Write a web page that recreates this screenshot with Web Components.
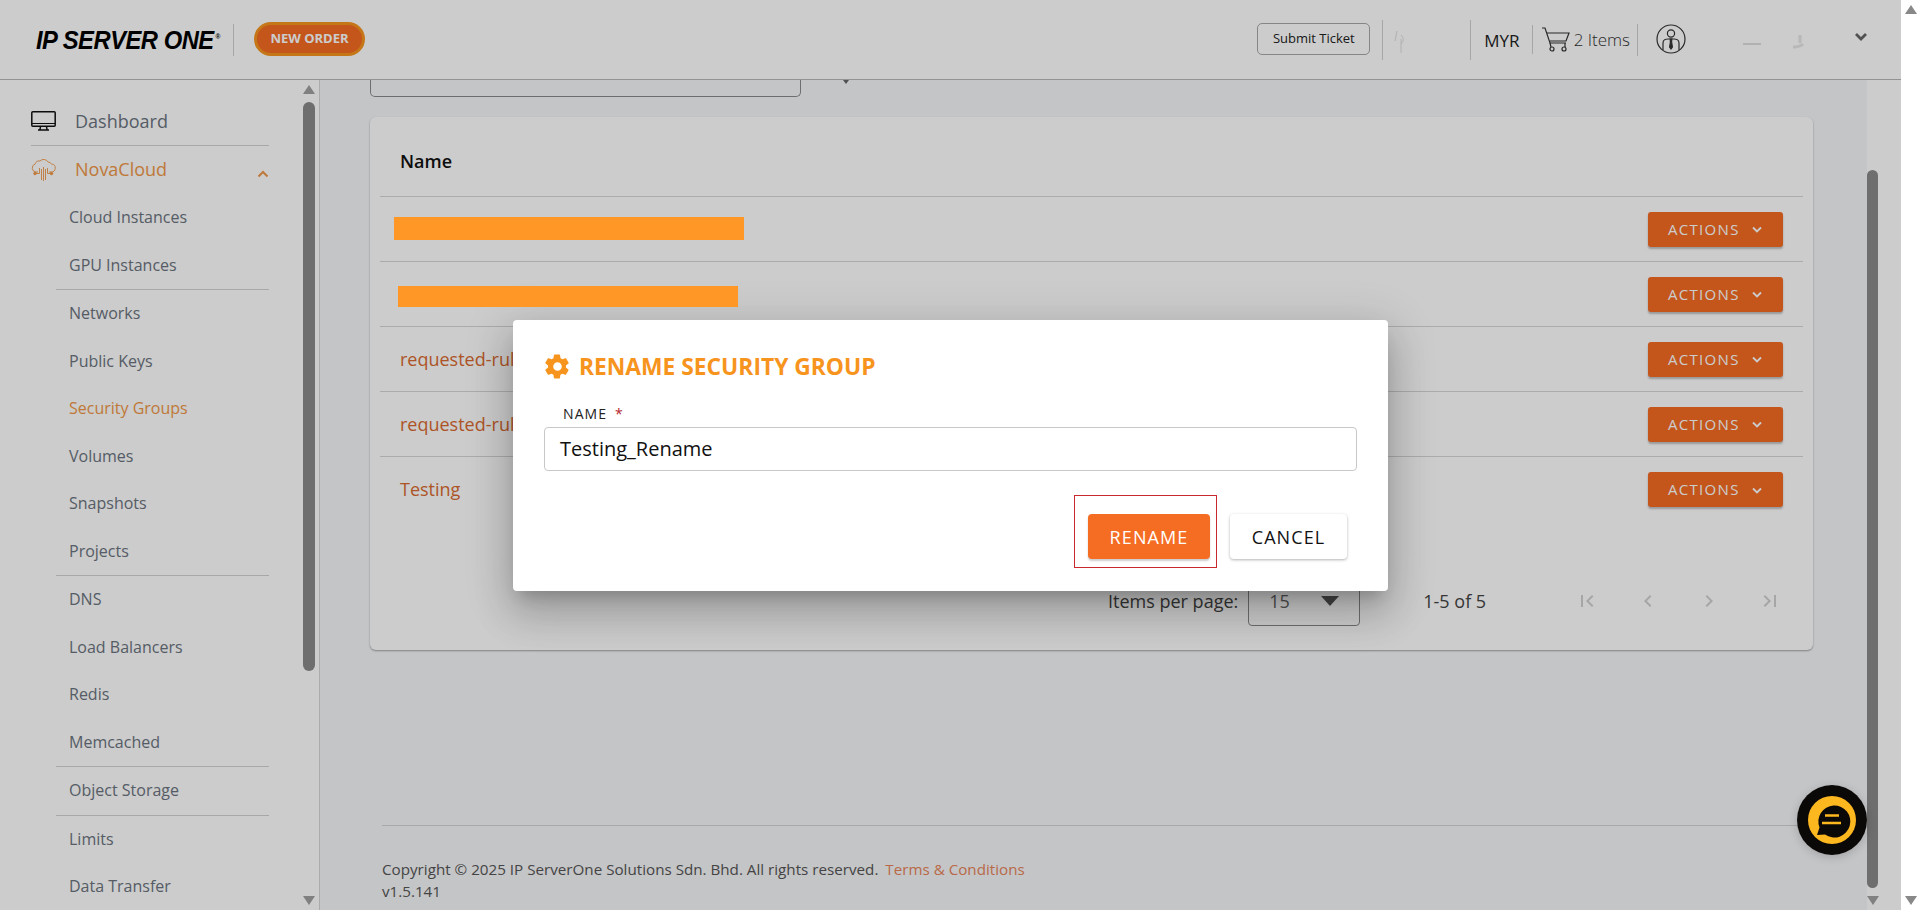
<!DOCTYPE html>
<html lang="en">
<head>
<meta charset="utf-8">
<title>Security Groups</title>
<style>
html,body{margin:0;height:100%;overflow:hidden;background:#fff}
body{font-family:"Open Sans","Noto Sans",sans-serif}
</style>
</head>
<body>
<app-shell>
  <ips-header slot="header"></ips-header>
  <ips-sidebar slot="sidebar"></ips-sidebar>
  <main-area slot="main"></main-area>
</app-shell>
<rename-dialog></rename-dialog>

<script>
const svgIcons = {
  first:'<path d="M18.41 16.59L13.82 12l4.59-4.59L17 6l-6 6 6 6zM6 6h2v12H6z"/>',
  prev:'<path d="M15.41 7.41L14 6l-6 6 6 6 1.41-1.41L10.83 12z"/>',
  next:'<path d="M10 6L8.59 7.41 13.17 12l-4.58 4.59L10 18l6-6z"/>',
  last:'<path d="M5.59 7.41L10.18 12l-4.59 4.59L7 18l6-6-6-6zM16 6h2v12h-2z"/>'
};
function define(name, html, init){
  customElements.define(name, class extends HTMLElement{
    constructor(){ super(); this.attachShadow({mode:'open'}).innerHTML = typeof html==='function'?html(this):html; }
    connectedCallback(){ if(init&&!this._i){this._i=1;init(this);} }
  });
}

define('scroll-rail', `<style>
:host{display:flex;flex-direction:column;align-items:center;width:var(--w,12px);height:100%}
.t{width:var(--w,12px);border-radius:6px;background:var(--thumb,#8a8a8a);flex:none}
i{display:block;width:0;height:0;border-left:6px solid transparent;border-right:6px solid transparent;flex:none}
.u{border-bottom:9px solid var(--arrow,#a0a0a0);margin-top:var(--utop,5px)}
.d{border-top:9px solid var(--arrow,#a0a0a0);margin-top:auto;margin-bottom:5px}
</style><i class="u"></i><div class="t"></div><i class="d"></i>`, el=>{
  const t=el.shadowRoot.querySelector('.t');
  t.style.height=el.getAttribute('thumb')+'px';
  t.style.marginTop=el.getAttribute('gap')+'px';
});

define('app-shell', `<style>
:host{display:grid;grid-template-columns:320px 1581px 19px;grid-template-rows:80px 830px;height:910px;width:1920px;overflow:hidden;background:#fff}
::slotted([slot=header]){grid-column:1/3;grid-row:1}
::slotted([slot=sidebar]){grid-column:1;grid-row:2}
::slotted([slot=main]){grid-column:2;grid-row:2}
.outer{grid-column:3;grid-row:1/3;display:flex;justify-content:center;--thumb:transparent;--arrow:#888}
</style>
<slot name="header"></slot><slot name="sidebar"></slot><slot name="main"></slot>
<div class="outer"><scroll-rail thumb="0" gap="0"></scroll-rail></div>`);

define('ips-header', `<style>
:host{display:flex;align-items:center;background:#fff;border-bottom:1px solid #b8b8b8;box-sizing:border-box;height:80px;padding:0 0 0 36px;color:#222;position:relative}
.logo{width:186px;height:24px;display:block;overflow:visible;white-space:nowrap;font:italic 700 25px/24px "Liberation Sans",sans-serif;color:#000;letter-spacing:-.5px;transform-origin:0 50%;transform:scaleX(.95);margin-top:-6px}
.logo sup{font-size:7px;font-style:normal;vertical-align:10px;margin-left:2px}
.sep{width:1px;background:#d0d0d0;flex:none}
.order{margin-left:20px;box-sizing:border-box;width:111px;height:34px;border-radius:17px;background:#f56c23;border:3px solid #f7941d;color:#fff;font:700 13px/27px "Open Sans",sans-serif;text-align:center;flex:none;margin-top:-1px}
.space{flex:1}
.ticket{box-sizing:border-box;width:113px;height:32px;border:1px solid #a8a8a8;border-radius:5px;font:500 13px/29px "Open Sans",sans-serif;text-align:center;color:#222;flex:none;margin-top:-1px}
.myr{font:400 17px/1 "Open Sans",sans-serif;color:#222}
.items{font:300 17px/1 "Open Sans",sans-serif;color:#333;white-space:nowrap}
svg{display:block;flex:none}
</style>
<span class="logo">IP SERVER ONE<sup>®</sup></span>
<span class="sep" style="height:32px;margin-left:11px"></span>
<span class="order">NEW ORDER</span>
<span class="space"></span>
<span class="ticket">Submit Ticket</span>
<span class="sep" style="height:40px;margin-left:12px"></span>
<svg width="72" height="30" viewBox="0 0 72 30" fill="none" stroke="#dedede" stroke-width="1"><path d="M14 6l-2 10M18 10c3 3 3 6 0 9M18 14v14"/><path d="M73 3v14"/></svg>
<span class="sep" style="height:40px;margin-left:15px"></span>
<span class="myr" style="margin:2px 0 0 13px">MYR</span>
<span class="sep" style="height:29px;margin-left:12px"></span>
<svg style="margin-left:9px" width="28" height="26" viewBox="0 0 28 26" fill="none" stroke="#333" stroke-width="1.2"><path d="M0 1h3l5 15h16"/><path d="M5 6h22l-3 8H8"/><circle cx="10" cy="22" r="2"/><circle cx="22" cy="22" r="2"/><path d="M8 16l1 4M23 16v4"/></svg>
<span class="items" style="margin:-1px 0 0 4px">2 Items</span>
<span class="sep" style="height:32px;margin-left:7px"></span>
<svg style="margin-left:18px;margin-top:-2px" width="30" height="30" viewBox="0 0 30 30" fill="none" stroke="#333" stroke-width="1.200"><circle cx="15" cy="15" r="14"/><circle cx="15" cy="9.500" r="3.600"/><path d="M7 26v-7c0-3 3-4 5-4h6c2 0 5 1 5 4v7"/><path d="M14.200 15h1.600l-.2 3 .8 5-1.400 2-1.400-2 .8-5z" fill="#333"/></svg>
<svg style="margin-left:55px;margin-top:6px" width="30" height="12" viewBox="0 0 30 12" fill="none" stroke="#bdbdbd" stroke-width="1"><path d="M2 7h18"/></svg>
<svg style="margin-left:14px" width="24" height="26" viewBox="0 0 24 26" fill="none" stroke="#e6e6e6" stroke-width="3"><path d="M8 20c4 0 8-1 10-3M15 8v8"/></svg>
<svg style="margin-left:45px;margin-right:33px;margin-top:-6px" width="14" height="10" viewBox="0 0 14 10" fill="none" stroke="#666" stroke-width="2.800"><path d="M2 2l5 5 5-5"/></svg>
`);

define('nav-item', `<style>
:host{display:block;height:47.5px;padding-left:69px;font:400 16px/47.5px "Open Sans",sans-serif;color:#6b7480;white-space:nowrap}
:host([active]){color:#ef9748}
</style><slot></slot>`);

define('nav-line', `<style>:host{display:block;height:1px;background:#d2d2d2;margin-left:56px}:host([full]){margin-left:31px}</style>`);

define('ips-sidebar', `<style>
:host{display:flex;box-sizing:border-box;width:320px;height:830px;background:#fff;border-right:1px solid #d6d6d6;overflow:hidden}
nav{flex:1;min-width:0;padding:17px 34px 0 0;height:830px;box-sizing:border-box;overflow:hidden}
.top{display:flex;align-items:center;padding-left:31px;font:400 18px/1 "Open Sans",sans-serif;color:#6b7480;box-sizing:border-box}
.top svg{display:block;flex:none}
.top span{margin-left:19px}
.dash{height:48px}
.nova{height:48px;color:#ef9748;padding-bottom:3px}
.chev{margin-left:auto;margin-top:10px}
.rail{margin-right:4px}
</style>
<nav>
  <div class="top dash">
    <svg width="25" height="20" viewBox="0 0 25 20" fill="none" stroke="#111" stroke-width="1.5"><rect x=".8" y=".8" width="23.400" height="14.400" rx="1"/><path d="M1 12.500h23" stroke-width="1"/><path d="M9.500 15.500l-.5 3M15.500 15.500l.5 3M7 19h11"/></svg>
    <span>Dashboard</span>
  </div>
  <nav-line full></nav-line>
  <div class="top nova">
    <svg width="25" height="26" viewBox="0 0 25 26" fill="none" stroke="#ef9748" stroke-width=".9"><path d="M7 16H5a4 4 0 0 1-1-7.800 4.500 4.500 0 0 1 5-3.200 5 5 0 0 1 8 1 4.500 4.500 0 0 1 3.500 2 4 4 0 0 1-.5 8h-2"/><path d="M10.500 13v11M12.500 11v14M14.500 13v11"/><path d="M8.500 12v5.500H5M16.500 12v5.500h3"/><circle cx="4" cy="17.500" r="1.300" fill="#ef9748"/><circle cx="20.500" cy="17.500" r="1.300" fill="#ef9748"/></svg>
    <span>NovaCloud</span>
    <svg class="chev" width="12" height="8" viewBox="0 0 12 8" fill="none" stroke="#ef9748" stroke-width="2"><path d="M1.500 6.500L6 2l4.500 4.500"/></svg>
  </div>
  <nav-item>Cloud Instances</nav-item>
  <nav-item>GPU Instances</nav-item>
  <nav-line></nav-line>
  <nav-item>Networks</nav-item>
  <nav-item>Public Keys</nav-item>
  <nav-item active>Security Groups</nav-item>
  <nav-item>Volumes</nav-item>
  <nav-item>Snapshots</nav-item>
  <nav-item>Projects</nav-item>
  <nav-line></nav-line>
  <nav-item>DNS</nav-item>
  <nav-item>Load Balancers</nav-item>
  <nav-item>Redis</nav-item>
  <nav-item>Memcached</nav-item>
  <nav-line></nav-line>
  <nav-item>Object Storage</nav-item>
  <nav-line></nav-line>
  <nav-item>Limits</nav-item>
  <nav-item>Data Transfer</nav-item>
</nav>
<scroll-rail class="rail" thumb="569" gap="8"></scroll-rail>`);

define('action-button', `<style>
:host{display:flex;align-items:center;box-sizing:border-box;width:135px;height:35px;background:#f56c23;border-radius:3px;color:#fff;font:500 15px/35px "Open Sans",sans-serif;letter-spacing:1.3px;padding-left:20px;box-shadow:0 2px 2px rgba(0,0,0,.25);flex:none}
svg{margin-left:11px;margin-top:2px}
</style>ACTIONS<svg width="12" height="8" viewBox="0 0 12 8" fill="none" stroke="#fff" stroke-width="1.800"><path d="M2 1.500L6 5.500l4-4"/></svg>`);

define('group-row', el=>`<style>
:host{display:flex;align-items:center;justify-content:space-between;height:65px;box-sizing:border-box;border-bottom:1px solid #d6d6d6;padding:0 20px;position:relative}
:host([last]){border-bottom:0}
span{font:400 18px/1 "Open Sans",sans-serif;color:#d96a30;white-space:nowrap}
:host([last]) span{margin-top:-2px}
b{position:absolute;display:block;background:#ff9726;z-index:30}
</style><span>${el.getAttribute('name')||''}</span><action-button></action-button>
${el.hasAttribute('mask')?`<b style="${el.getAttribute('mask')}"></b>`:''}`);

define('page-button', el=>`<style>
:host{display:block;width:24px;height:24px}
svg{display:block;width:24px;height:24px;fill:#d0d0d0}
</style><svg viewBox="0 0 24 24">${svgIcons[el.getAttribute('icon')]}</svg>`);

define('group-table', `<style>
:host{display:block;box-sizing:border-box;width:1443px;height:533px;background:#fff;border-radius:6px;padding:0 10px;box-shadow:0 1px 2px rgba(0,0,0,.35);flex:none}
.head{height:80px;box-sizing:border-box;border-bottom:1px solid #d6d6d6;padding-left:20px;font:600 18px/88px "Open Sans",sans-serif;color:#111}
.pager{display:flex;align-items:center;padding-top:30px;height:128px;box-sizing:border-box;font:400 18px/1 "Open Sans",sans-serif;color:#444}
.pl{margin-left:728px;white-space:nowrap}
.sel{box-sizing:border-box;width:112px;height:50px;border:1px solid #8a8a8a;border-radius:4px;margin-left:10px;display:flex;align-items:center;padding-left:20px;color:#666}
.sel i{display:block;margin-left:auto;margin-right:20px;width:0;height:0;border-left:9px solid transparent;border-right:9px solid transparent;border-top:10px solid #555}
.rng{margin-left:63px;white-space:nowrap}
.nav{display:flex;margin-left:auto;gap:37px;margin-right:21px}
</style>
<div class="head">Name</div>
<group-row mask="left:14px;top:20px;width:350px;height:23px"></group-row>
<group-row mask="left:18px;top:24px;width:340px;height:21px"></group-row>
<group-row name="requested-rul"></group-row>
<group-row name="requested-rul"></group-row>
<group-row name="Testing" last></group-row>
<div class="pager">
  <span class="pl">Items per page:</span>
  <div class="sel">15<i></i></div>
  <span class="rng">1-5 of 5</span>
  <div class="nav"><page-button icon="first"></page-button><page-button icon="prev"></page-button><page-button icon="next"></page-button><page-button icon="last"></page-button></div>
</div>`);

define('chat-bubble', `<style>
:host{display:block;position:absolute;right:0;bottom:55px;width:70px;height:70px;z-index:30;border-radius:50%;box-shadow:0 2px 10px rgba(0,0,0,.18)}
svg{display:block}
</style><svg width="70" height="70" viewBox="0 0 70 70"><circle cx="35" cy="35" r="35" fill="#0b0808"/><circle cx="35" cy="35" r="24" fill="#fdb71f"/><path d="M20 50l2.500-7.500A16 16 0 1 1 28 49.500z" fill="#0b0808"/><path d="M28 30.500h14M25 38h19" stroke="#fdb71f" stroke-width="2.400" fill="none"/></svg>`);

define('main-area', `<style>
:host{display:flex;width:1581px;height:830px;background:#fff;position:relative;overflow:hidden}
.col{width:1547px;height:830px;background:#f6f7f9;flex:none;display:flex;flex-direction:column;padding-left:50px;box-sizing:border-box;position:relative}
.top{display:flex;height:17px;margin-bottom:20px;flex:none}
.stub{box-sizing:border-box;width:431px;height:17px;border:1px solid #8a8a8a;border-top:0;border-radius:0 0 5px 5px}
.mark{display:block;width:0;height:0;margin-left:42px;border-left:3px solid transparent;border-right:3px solid transparent;border-top:4px solid #666}
footer{margin:175px 0 0 12px;border-top:1px solid #d4d4d4;padding-top:32px;font:400 15.200px/22px "Open Sans",sans-serif;color:#555;width:1422px;white-space:nowrap}
footer a{color:#e8845a;margin-left:3px}
.railbox{flex:none;width:34px}
.tr{display:flex;flex-direction:column;align-items:center;width:11px;height:100%}
.th{width:11px;height:718px;margin-top:90px;border-radius:6px;background:#8a8a8a}
.ar{margin-top:auto;margin-bottom:5px;width:0;height:0;border-left:6px solid transparent;border-right:6px solid transparent;border-top:9px solid #a0a0a0}
</style>
<div class="col">
  <div class="top"><div class="stub"></div><i class="mark"></i></div>
  <group-table></group-table>
  <footer>Copyright © 2025 IP ServerOne Solutions Sdn. Bhd. All rights reserved. <a>Terms &amp; Conditions</a><br>v1.5.141</footer>
  <chat-bubble></chat-bubble>
</div>
<div class="railbox"><div class="tr"><div class="th"></div><div class="ar"></div></div></div>`);

define('rename-dialog', `<style>
:host{display:flex;align-items:center;justify-content:center;position:absolute;left:0;top:0;width:1901px;height:910px;background:rgba(0,0,0,.2);z-index:10}
.box{box-sizing:border-box;width:875px;height:271px;background:#fff;border-radius:4px;padding:32px 31px 0;box-shadow:0 11px 15px -7px rgba(0,0,0,.2),0 24px 38px 3px rgba(0,0,0,.14),0 9px 46px 8px rgba(0,0,0,.12)}
h2{display:flex;align-items:center;margin:0;height:30px;font:700 22.800px/30px "Open Sans",sans-serif;color:#f7941d;white-space:nowrap}
h2 svg{display:block;margin-right:8px;flex:none}
label{display:block;margin:23px 0 0 19px;height:18px;font:400 14px/18px "Open Sans",sans-serif;letter-spacing:1.100px;color:#222}
label em{font-style:normal;color:#b3262b;margin-left:3px}
.input{box-sizing:border-box;height:44px;margin-top:4px;border:1px solid #c8c8c8;border-radius:4px;padding-left:15px;font:400 20px/41px "Open Sans",sans-serif;color:#111}
.acts{display:flex;align-items:flex-start;justify-content:flex-end;margin-top:24px;padding-right:10px}
.mark{box-sizing:border-box;width:143px;height:73px;border:1px solid #c9282d;padding:18px 0 0 13px;flex:none}
.btn{box-sizing:border-box;height:45px;border-radius:4px;font:500 18px/46px "Open Sans",sans-serif;letter-spacing:1.100px;text-align:center;box-shadow:0 2px 2px rgba(0,0,0,.2)}
.ok{width:122px;background:#f56c23;color:#fff}
.no{width:117px;margin:19px 0 0 13px;background:#fff;color:#111;box-shadow:0 1px 3px rgba(0,0,0,.3)}
</style>
<div class="box">
  <h2><svg width="27" height="27" viewBox="0 0 24 24" fill="#f7941d"><path fill-rule="evenodd" d="M19.500 12.900a7.600 7.600 0 0 0 0-1.800l2.200-1.700c.3-.2.300-.5.200-.8l-2.200-3.700c-.2-.3-.5-.4-.8-.3l-2.600 1c-.5-.4-1-.7-1.600-1l-.4-2.700c0-.3-.3-.5-.6-.5H9.400c-.3 0-.6.200-.6.500l-.4 2.700c-.6.300-1.100.6-1.600 1l-2.600-1c-.3-.1-.6 0-.8.300L1.200 8.600c-.1.300-.1.600.2.800l2.200 1.700a7.600 7.600 0 0 0 0 1.800l-2.200 1.700c-.3.200-.3.500-.2.800l2.200 3.700c.2.300.5.400.8.300l2.600-1c.5.400 1 .7 1.600 1l.4 2.700c0 .3.300.5.600.5h4.200c.3 0 .6-.2.600-.5l.4-2.700c.6-.3 1.100-.6 1.600-1l2.600 1c.3.1.6 0 .8-.3l2.200-3.700c.1-.3.1-.6-.2-.8zM12 15.800a3.800 3.800 0 1 1 0-7.600 3.800 3.800 0 0 1 0 7.600z"/></svg>RENAME SECURITY GROUP</h2>
  <label>NAME <em>*</em></label>
  <div class="input">Testing_Rename</div>
  <div class="acts">
    <div class="mark"><div class="btn ok">RENAME</div></div>
    <div class="btn no">CANCEL</div>
  </div>
</div>`);
</script>
</body>
</html>
